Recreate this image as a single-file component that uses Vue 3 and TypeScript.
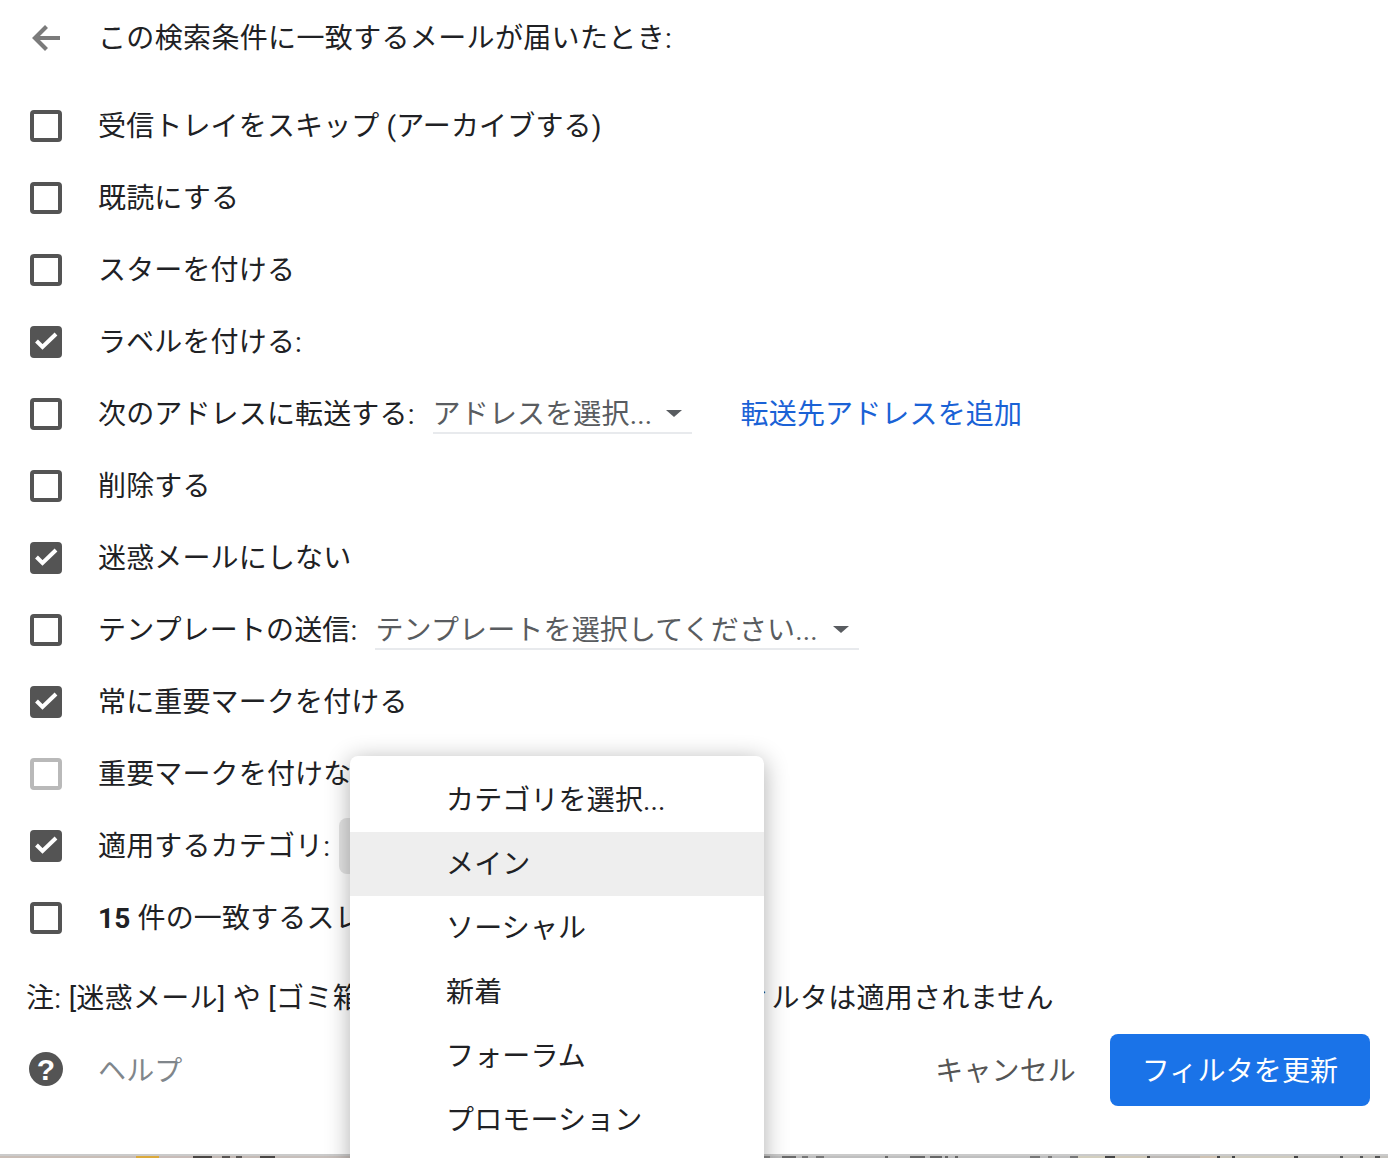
<script setup lang="ts">
interface Row {
  label: string
  state: 'off' | 'on' | 'disabled'
  kind?: 'forward' | 'template' | 'category'
  lead?: string
}

const rows: Row[] = [
  { label: '受信トレイをスキップ (アーカイブする)', state: 'off' },
  { label: '既読にする', state: 'off' },
  { label: 'スターを付ける', state: 'off' },
  { label: 'ラベルを付ける:', state: 'on' },
  { label: '次のアドレスに転送する:', state: 'off', kind: 'forward' },
  { label: '削除する', state: 'off' },
  { label: '迷惑メールにしない', state: 'on' },
  { label: 'テンプレートの送信:', state: 'off', kind: 'template' },
  { label: '常に重要マークを付ける', state: 'on' },
  { label: '重要マークを付けない', state: 'disabled' },
  { label: '適用するカテゴリ:', state: 'on', kind: 'category' },
  { label: ' 件の一致するスレッドにもフィルタを適用する。', lead: '15', state: 'off' }
]

const menuItems = ['カテゴリを選択...', 'メイン', 'ソーシャル', '新着', 'フォーラム', 'プロモーション']
const activeItem = 'メイン'
</script>

<template>
  <div class="page">
    <main class="panel">
      <header class="head">
        <svg class="back" viewBox="0 0 32 32" width="32" height="32" aria-hidden="true">
          <path d="M30 16H6M16.5 4.5L5 16l11.5 11.5" fill="none" stroke="#7b7b7b" stroke-width="4.2" />
        </svg>
        <span class="head-text">この検索条件に一致するメールが届いたとき:</span>
      </header>

      <ul class="rows">
        <li v-for="row in rows" :key="row.label" class="row">
          <span class="box" :class="row.state">
            <svg v-if="row.state === 'on'" viewBox="0 0 32 32" width="32" height="32" aria-hidden="true">
              <path d="M6.5 15l6 6L26 8" fill="none" stroke="#fff" stroke-width="4" />
            </svg>
          </span>
          <span class="label"><b v-if="row.lead">{{ row.lead }}</b>{{ row.label }}</span>

          <template v-if="row.kind === 'forward'">
            <span class="select forward">
              <span class="select-text">アドレスを選択...</span>
              <i class="caret"></i>
            </span>
            <a class="link">転送先アドレスを追加</a>
          </template>
          <span v-else-if="row.kind === 'template'" class="select template">
            <span class="select-text">テンプレートを選択してください...</span>
            <i class="caret"></i>
          </span>
          <span v-else-if="row.kind === 'category'" class="category"></span>
        </li>
      </ul>

      <p class="note">注: [迷惑メール] や [ゴミ箱] 内に移動済みのメールにはフィルタは適用されません</p>

      <footer class="foot">
        <div class="help">
          <svg viewBox="0 0 36 36" width="36" height="36" aria-hidden="true">
            <circle cx="18" cy="18" r="17" fill="#545454" />
            <text x="18" y="29" text-anchor="middle" class="q">?</text>
          </svg>
          <span class="help-text">ヘルプ</span>
        </div>
        <div class="actions">
          <span class="cancel">キャンセル</span>
          <span class="primary">フィルタを更新</span>
        </div>
      </footer>
    </main>

    <div class="strip"></div>

    <ul class="menu">
      <li v-for="item in menuItems" :key="item" class="menu-item" :class="{ active: item === activeItem }">{{ item }}</li>
    </ul>
  </div>
</template>

<style scoped>
.page {
  position: relative;
  display: flex;
  flex-direction: column;
  width: 1388px;
  height: 1158px;
  overflow: hidden;
  background: #fff;
  color: #202124;
  font-family: Roboto, "Noto Sans CJK JP", sans-serif;
  font-size: 28px;
  letter-spacing: 0.15px;
}
.panel {
  flex: 1;
  min-height: 0;
  display: flex;
  flex-direction: column;
}
.head {
  display: flex;
  align-items: center;
  gap: 36px;
  height: 76px;
  padding-left: 30px;
  margin-bottom: 14px;
}
.head-text {
  padding-bottom: 4px;
  letter-spacing: 0.35px;
}
.rows {
  list-style: none;
  margin: 0;
  padding: 0 0 0 30px;
}
.row {
  display: flex;
  align-items: center;
  height: 72px;
  white-space: nowrap;
}
.box {
  flex: none;
  width: 32px;
  height: 32px;
  box-sizing: border-box;
  border: 4px solid #545454;
  border-radius: 4px;
  margin-right: 36px;
  position: relative;
}
.box.on {
  background: #545454;
}
.box.on svg {
  position: absolute;
  left: -4px;
  top: -4px;
}
.box.disabled {
  border-color: #b9b9b9;
}
.label {
  padding-bottom: 4px;
}
.label b {
  font-weight: 700;
}
.select {
  display: flex;
  align-items: center;
  height: 40px;
  margin-left: 18px;
  border-bottom: 2px solid #e8eaed;
  color: #595c60;
  position: relative;
  top: -1px;
}
.forward {
  width: 259px;
}
.template {
  width: 484px;
}
.select-text {
  flex: 1;
}
.caret {
  width: 0;
  height: 0;
  border-left: 8px solid transparent;
  border-right: 8px solid transparent;
  border-top: 7px solid #595c60;
  margin: 2px 10px 0 0;
}
.link {
  margin-left: 49px;
  padding-bottom: 4px;
  color: #1a62d6;
}
.category {
  width: 120px;
  height: 56px;
  margin-left: 9px;
  background: #e4e4e4;
  border-radius: 8px;
}
.note {
  margin: 25px 0 0 26px;
  height: 40px;
  line-height: 40px;
  white-space: nowrap;
  letter-spacing: 0.3px;
}
.foot {
  display: flex;
  align-items: center;
  justify-content: space-between;
  height: 72px;
  margin-top: 15px;
  padding: 0 18px 0 28px;
}
.help {
  display: flex;
  align-items: center;
  gap: 34px;
  color: #80868b;
}
.help svg {
  margin-bottom: 2px;
}
.help-text {
  padding-bottom: 2px;
}
.q {
  fill: #fff;
  font-family: "Liberation Sans", sans-serif;
  font-size: 30px;
  font-weight: 700;
}
.actions {
  display: flex;
  align-items: center;
  gap: 34px;
}
.cancel {
  color: #555;
  padding-bottom: 2px;
}
.primary {
  display: flex;
  align-items: center;
  justify-content: center;
  box-sizing: border-box;
  width: 260px;
  height: 72px;
  padding-bottom: 2px;
  border-radius: 8px;
  background: #1a73e8;
  color: #fff;
}
.strip {
  flex: none;
  height: 2px;
  border-top: 2px solid #cbcbcb;
  background: linear-gradient(
    90deg,
    #c9beb7 0 136px,
    #dba93c 136px 159px,
    #c8bcb8 159px 193px,
    #4a4644 193px 212px,
    #c4bab5 212px 222px,
    #5a5553 222px 230px,
    #c4bab5 230px 236px,
    #5a5553 236px 242px,
    #c4bab5 242px 260px,
    #4a4644 260px 275px,
    #c7bfbb 275px 764px,
    #8c8c8c 764px 770px,
    #bfbfbf 770px 782px,
    #6b6b6b 782px 796px,
    #bfbfbf 796px 802px,
    #777 802px 808px,
    #bfbfbf 808px 816px,
    #777 816px 824px,
    #bfbfbf 824px 885px,
    #666 885px 888px,
    #bfbfbf 888px 910px,
    #666 910px 925px,
    #bfbfbf 925px 930px,
    #666 930px 942px,
    #bfbfbf 942px 945px,
    #666 945px 948px,
    #bfbfbf 948px 955px,
    #666 955px 958px,
    #bfbfbf 958px 1030px,
    #777 1030px 1040px,
    #bfbfbf 1040px 1048px,
    #777 1048px 1052px,
    #bfbfbf 1052px 1070px,
    #777 1070px 1078px,
    #d3cfbf 1078px 1105px,
    #444 1105px 1115px,
    #cfc8b8 1115px 1147px,
    #444 1147px 1150px,
    #bdb9b5 1150px 1200px,
    #cfc2b2 1200px 1217px,
    #444 1217px 1220px,
    #c8c4b8 1220px 1232px,
    #444 1232px 1235px,
    #cfcbbf 1235px 1294px,
    #444 1294px 1298px,
    #c4c2bd 1298px 1340px,
    #555 1340px 1343px,
    #c4c2bd 1343px 1360px,
    #555 1360px 1363px,
    #c4c2bd 1363px 1375px,
    #555 1375px 1380px,
    #c4c2bd 1380px 1388px
  );
}
.menu {
  position: absolute;
  left: 350px;
  top: 756px;
  width: 414px;
  height: 420px;
  box-sizing: border-box;
  margin: 0;
  padding: 12px 0;
  list-style: none;
  background: #fff;
  border-radius: 8px;
  box-shadow: 0 4px 24px rgba(0, 0, 0, 0.32);
}
.menu-item {
  height: 64px;
  line-height: 66px;
  padding-left: 96px;
  white-space: nowrap;
}
.menu-item.active {
  background: #eee;
}
</style>
